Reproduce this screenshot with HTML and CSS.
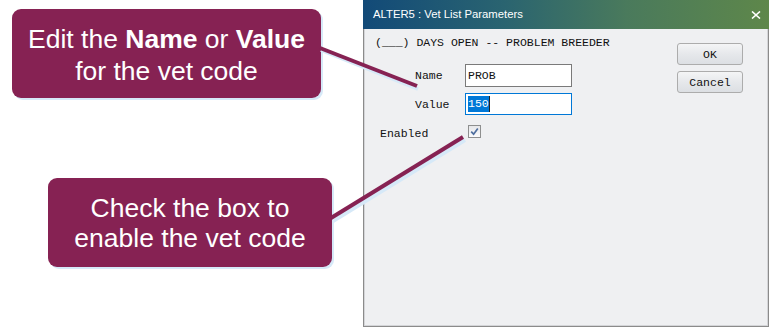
FILE: index.html
```html
<!DOCTYPE html>
<html lang="en">
<head>
    <meta charset="UTF-8">
    <meta name="viewport" content="width=device-width, initial-scale=1.0">
    <title>Vet List Parameters</title>
    <link rel="stylesheet" href="styles.css">
</head>
<body>
    <div class="page">
        <div class="notes">
            <div class="callout callout-edit"><p>Edit the <b>Name</b> or <b>Value</b><br>for the vet code</p></div>
            <div class="callout callout-check"><p>Check the box to<br>enable the vet code</p></div>
        </div>

        <div class="dialog">
            <div class="titlebar">
                <span class="title">ALTER5 : Vet List Parameters</span>
                <svg class="close" width="10" height="8" viewBox="0 0 10 8">
                    <path d="M1 0.5 L9 7.5 M9 0.5 L1 7.5" stroke="#fff" stroke-width="1.6" fill="none"/>
                </svg>
            </div>
            <div class="dialog-body">
                <div class="form">
                    <div class="heading">(___) DAYS OPEN -- PROBLEM BREEDER</div>
                    <div class="field">
                        <label>Name</label>
                        <div class="input">PROB</div>
                    </div>
                    <div class="field">
                        <label>Value</label>
                        <div class="input focused"><span class="sel">150</span><span class="caret"></span></div>
                    </div>
                    <div class="check-row">
                        <label>Enabled</label>
                        <span class="checkbox">
                            <svg width="11" height="11" viewBox="0 0 11 11">
                                <path d="M2.2 5.6 L4.6 8.2 L8.8 2.4" stroke="#4f6f9f" stroke-width="1.7" fill="none"/>
                            </svg>
                        </span>
                    </div>
                </div>
                <div class="buttons">
                    <button>OK</button>
                    <button>Cancel</button>
                </div>
            </div>
        </div>

        <!-- pointer lines from the notes into the dialog -->
        <svg class="pointers" width="769" height="329" viewBox="0 0 769 329">
            <g stroke="#d6e9f8" stroke-width="4">
                <line x1="321" y1="50" x2="418" y2="89"/>
                <line x1="333" y1="221" x2="465" y2="140"/>
            </g>
            <g stroke="#862253" stroke-width="4" stroke-linecap="butt">
                <line x1="320" y1="48" x2="417" y2="86"/>
                <line x1="331" y1="218" x2="463" y2="137"/>
            </g>
        </svg>
    </div>
</body>
</html>
```

FILE: styles.css
```css
body {
    margin: 0;
    background: #fff;
    overflow: hidden;
}
.page {
    position: relative;
    display: flex;
    width: 769px;
    height: 329px;
}
.notes {
    width: 363px;
    flex-shrink: 0;
}
.callout {
    background: #862253;
    color: #fff;
    font-family: "Liberation Sans", Arial, sans-serif;
    font-size: 26.5px;
    line-height: 31px;
    text-align: center;
    border-radius: 9px;
    box-shadow: 2px 2px 0 #d6e9f8;
    box-sizing: border-box;
    display: flex;
    align-items: center;
    justify-content: center;
}
.callout p {
    margin: 0;
}
.callout-edit {
    margin: 9px 0 0 12px;
    width: 309px;
    height: 89px;
    padding-top: 3px;
    line-height: 32px;
}
.callout-check {
    margin: 80px 0 0 48px;
    width: 284px;
    height: 89px;
    line-height: 30px;
}

.dialog {
    width: 406px;
    height: 327px;
    box-sizing: border-box;
    border: 1px solid #8b8b8b;
    border-top: none;
    background: #eff0f2;
    display: flex;
    flex-direction: column;
}
.titlebar {
    height: 27px;
    margin: 0 -1px;
    background: linear-gradient(to right, #124a78 0%, #2a6470 35%, #4a7a5c 65%, #5e874a 100%);
    color: #fff;
    display: flex;
    align-items: center;
    justify-content: space-between;
    padding: 0 8px 2px 10px;
    font-family: "Liberation Sans", Arial, sans-serif;
    font-size: 11.3px;
}
.close {
    display: block;
    margin-top: 2px;
}
.dialog-body {
    flex: 1;
    display: flex;
    border-left: 1px solid #d4d5d8;
    border-right: 1px solid #d4d5d8;
    border-bottom: 1px solid #d4d5d8;
    font-family: "Liberation Mono", "Courier New", monospace;
    font-size: 11.5px;
    color: #111;
}
.form {
    flex: 1;
    padding: 6px 0 0 10px;
}
.heading {
    line-height: 16px;
}
.field {
    display: flex;
    align-items: center;
    margin: 13px 0 0 40px;
}
.field + .field {
    margin-top: 6px;
}
.field label {
    width: 50px;
}
.input {
    width: 107px;
    height: 23px;
    box-sizing: border-box;
    border: 1px solid #7a7a7a;
    background: #fff;
    padding: 0 2px;
    display: flex;
    align-items: center;
}
.input.focused {
    border-color: #0078d7;
    height: 22px;
}
.sel {
    background: #0078d7;
    color: #fff;
    line-height: 16px;
}
.caret {
    width: 1px;
    height: 16px;
    background: #222;
}
.check-row {
    display: flex;
    align-items: center;
    margin: 12px 0 0 5px;
}
.check-row label {
    width: 88px;
}
.checkbox {
    width: 13px;
    height: 13px;
    box-sizing: border-box;
    border: 1px solid #8e8f8f;
    background: linear-gradient(#e6e7ea, #fbfbfc);
    display: flex;
    align-items: center;
    justify-content: center;
    margin-top: -5px;
}
.checkbox svg {
    display: block;
}
.buttons {
    display: flex;
    flex-direction: column;
    gap: 6px;
    padding: 14px 24px 0 0;
}
button {
    width: 66px;
    height: 22px;
    padding: 0;
    border: 1px solid #acacac;
    border-radius: 3px;
    background: linear-gradient(#f4f5f6, #e6e8eb 50%, #dcdfe3);
    font-family: "Liberation Mono", "Courier New", monospace;
    font-size: 11.5px;
    color: #111;
}

.pointers {
    position: absolute;
    left: 0;
    top: 0;
    pointer-events: none;
}
```
